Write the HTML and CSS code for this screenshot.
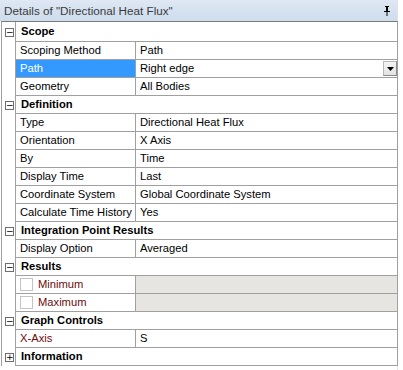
FILE: index.html
```html
<!DOCTYPE html>
<html>
<head>
<meta charset="utf-8">
<link rel="stylesheet" href="styles.css">
</head>
<body>
<div class="panel">
  <div class="titlebar">
    <span class="title">Details of "Directional Heat Flux"</span>
    <svg class="pin" width="8" height="10" viewBox="0 0 8 10"><path d="M2 0h4v1h-1v4h2v1H1V5h2V1H2z M3 1h1v4H3z" fill="#000"/><rect x="3.5" y="6" width="1" height="4" fill="#000"/></svg>
  </div>
  <div class="grid">
    <div class="row group first"><div class="gut"><span class="tog">−</span></div><div class="gcell">Scope</div></div>
    <div class="row"><div class="gut"></div><div class="lab">Scoping Method</div><div class="val">Path</div></div>
    <div class="row sel"><div class="gut"></div><div class="lab">Path</div><div class="val">Right edge<span class="dd"><svg width="7" height="4" viewBox="0 0 7 4"><path d="M0 0h7L3.5 4z" fill="#000"/></svg></span></div></div>
    <div class="row"><div class="gut"></div><div class="lab">Geometry</div><div class="val">All Bodies</div></div>
    <div class="row group"><div class="gut"><span class="tog">−</span></div><div class="gcell">Definition</div></div>
    <div class="row"><div class="gut"></div><div class="lab">Type</div><div class="val">Directional Heat Flux</div></div>
    <div class="row"><div class="gut"></div><div class="lab">Orientation</div><div class="val">X Axis</div></div>
    <div class="row"><div class="gut"></div><div class="lab">By</div><div class="val">Time</div></div>
    <div class="row"><div class="gut"></div><div class="lab">Display Time</div><div class="val">Last</div></div>
    <div class="row"><div class="gut"></div><div class="lab">Coordinate System</div><div class="val">Global Coordinate System</div></div>
    <div class="row"><div class="gut"></div><div class="lab">Calculate Time History</div><div class="val">Yes</div></div>
    <div class="row group"><div class="gut"><span class="tog">−</span></div><div class="gcell">Integration Point Results</div></div>
    <div class="row"><div class="gut"></div><div class="lab">Display Option</div><div class="val">Averaged</div></div>
    <div class="row group"><div class="gut"><span class="tog">−</span></div><div class="gcell">Results</div></div>
    <div class="row"><div class="gut"></div><div class="lab red"><span class="chk"></span>Minimum</div><div class="val dis"></div></div>
    <div class="row"><div class="gut"></div><div class="lab red"><span class="chk"></span>Maximum</div><div class="val dis"></div></div>
    <div class="row group"><div class="gut"><span class="tog">−</span></div><div class="gcell">Graph Controls</div></div>
    <div class="row"><div class="gut"></div><div class="lab red">X-Axis</div><div class="val">S</div></div>
    <div class="row group"><div class="gut"><span class="tog">+</span></div><div class="gcell">Information</div></div>
  </div>
</div>
</body>
</html>
```
FILE: styles.css
```css
html, body {
  margin: 0;
  padding: 0;
  background: #ffffff;
}
body {
  font-family: "Liberation Sans", Arial, sans-serif;
  font-size: 11.2px;
  color: #000;
  width: 403px;
  height: 370px;
  overflow: hidden;
}
.panel {
  width: 397px;
  border-right: 1px solid #e3e3e3;
  height: 370px;
  background: #fff;
}
.titlebar {
  height: 21px;
  display: flex;
  align-items: center;
  justify-content: space-between;
  padding: 0 6px 0 4px;
  background: linear-gradient(to bottom, #dfe8f4, #cddcec);
  color: #3b3b3b;
  box-sizing: border-box;
}
.title { font-size: 11.7px; }
.pin { margin-top: 1px; }
.grid {
  border-top: 1px solid #7a7a7a;
  margin-left: 1px;
  width: 395px;
  border-left: 1px solid #a0a0a0;
  border-right: 1px solid #a0a0a0;
}
.row {
  display: flex;
  height: 18px;
}
.row.first { height: 20px; }
.gut {
  flex: none;
  border-right: 1px solid #a0a0a0;
  display: flex;
  align-items: center;
  justify-content: flex-start;
  padding-left: 3px;
  box-sizing: border-box;
  width: 14px;
}
.tog {
  width: 7px;
  height: 7px;
  border: 1px solid #6d6d6d;
  font-size: 9px;
  line-height: 7px;
  text-align: center;
  font-family: "DejaVu Sans", sans-serif;
  color: #000;
  background: #fff;
}
.gcell {
  flex: 1;
  border-bottom: 1px solid #a0a0a0;
  font-weight: bold;
  padding-left: 5px;
  line-height: 17px;
}
.first .gcell { line-height: 19px; }
.lab {
  flex: none;
  border-right: 1px solid #a0a0a0;
  border-bottom: 1px solid #a0a0a0;
  padding-left: 4px;
  box-sizing: border-box;
  width: 120px;
  line-height: 17px;
  white-space: nowrap;
  display: flex;
  align-items: center;
}
.val {
  flex: 1;
  border-bottom: 1px solid #a0a0a0;
  padding-left: 4px;
  line-height: 17px;
  position: relative;
}
.sel .lab {
  background: #3399ff;
  color: #fff;
}
.red { color: #6e0b0b; }
.dis { background: #e6e5e2; }
.chk {
  width: 11px;
  height: 11px;
  border: 1px solid #c4c4c4;
  background: #fff;
  margin-right: 5px;
  flex: none;
}
.dd {
  position: absolute;
  right: 0;
  top: 1px;
  width: 14px;
  height: 15px;
  box-sizing: border-box;
  border: 1px solid #b8b8b8;
  border-right-color: #8a8a8a;
  border-bottom-color: #8a8a8a;
  background: linear-gradient(#f4f4f4, #e3e3e3);
  display: flex;
  align-items: center;
  justify-content: center;
}
```
